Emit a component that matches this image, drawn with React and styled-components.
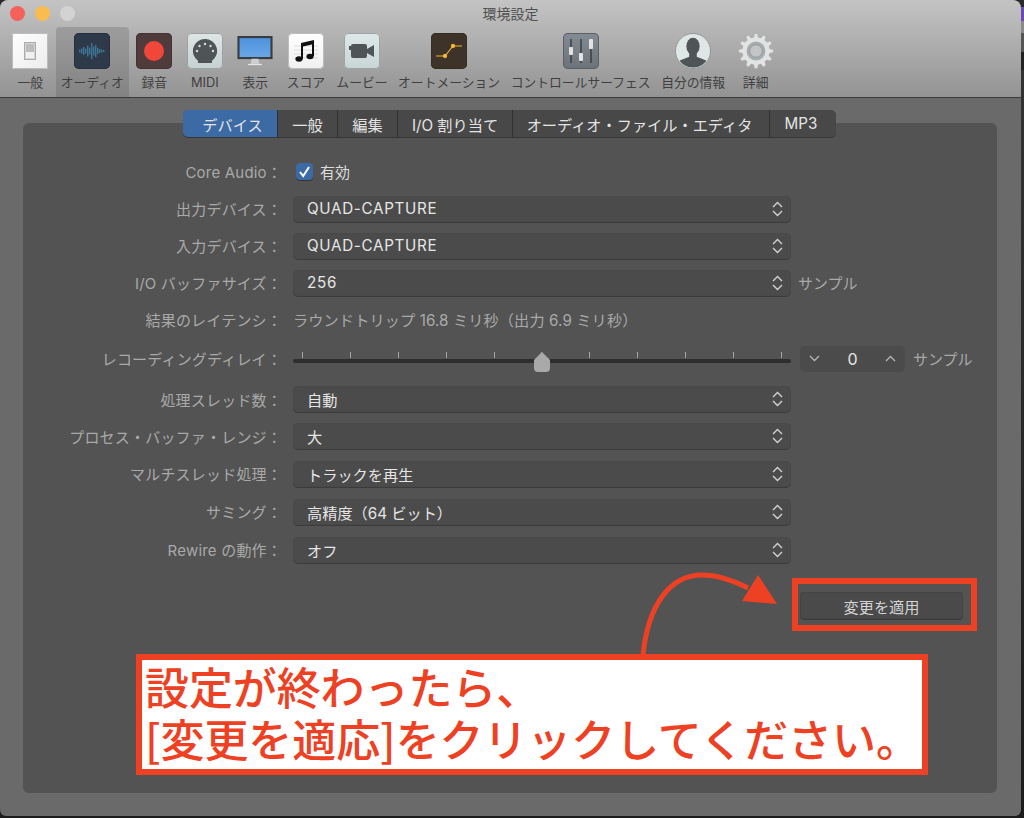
import React from 'react';
import styled, { createGlobalStyle } from 'styled-components';

const GlobalStyle = createGlobalStyle`
  html, body {
    margin: 0;
    padding: 0;
    width: 1024px;
    height: 818px;
    overflow: hidden;
    background: linear-gradient(#2a2a2c 0, #2a2a2c 7px, #6a4bb0 7px, #6a4bb0 21px, #8a8a8a 21px, #8a8a8a 33px, #555 33px, #555 52px, #222 52px, #222 70px, #333 70px, #1c1c1c 818px);
    font-family: Inter, "Noto Sans CJK JP", sans-serif;
  }
  * { box-sizing: border-box; }
`;

const Window = styled.div`
  position: relative;
  width: 1021px;
  height: 816px;
  border-radius: 8px 8px 6px 6px;
  overflow: hidden;
  background: #6a6a6a;
  display: flex;
  flex-direction: column;
`;

const TitleBar = styled.div`
  height: 27px;
  display: flex;
  align-items: center;
  padding-left: 10px;
  gap: 10px;
  position: relative;
`;

const Light = styled.span`
  width: 15px;
  height: 15px;
  border-radius: 50%;
  background: ${(p) => p.color};
`;

const Title = styled.div`
  position: absolute;
  left: 0;
  right: 0;
  top: 3px;
  text-align: center;
  font-size: 14px;
  line-height: 22px;
  color: #4f4f4f;
`;

const Header = styled.header`
  height: 98px;
  background: linear-gradient(#c4c4c4, #939393);
  border-bottom: 1px solid #3c3c3c;
  flex: none;
`;

const Toolbar = styled.nav`
  display: flex;
  padding-left: 5px;
  height: 70px;
`;

const ToolItem = styled.div`
  display: flex;
  flex-direction: column;
  align-items: center;
  padding: 0 5.25px;
  min-width: 50.5px;
  border-radius: 4px 4px 0 0;
  background: ${(p) => (p.$active ? 'rgba(90,90,90,0.28)' : 'transparent')};
`;

const IconBox = styled.div`
  width: 36px;
  height: 36px;
  margin-top: 6px;
  flex: none;
  display: flex;
  align-items: center;
  justify-content: center;
`;

const ToolLabel = styled.span`
  margin-top: 5px;
  font-size: 12.8px;
  line-height: 18px;
  color: #3f3f3f;
  white-space: nowrap;
`;

const Content = styled.main`
  flex: 1;
  padding: 12px 24px 23px 23px;
  display: flex;
  flex-direction: column;
  align-items: stretch;
`;

const Tabs = styled.div`
  align-self: center;
  display: flex;
  height: 27px;
  margin: 0 0 -14px -1px;
  position: relative;
  z-index: 1;
  border-radius: 5px;
  background: #484848;
  box-shadow: 0 1px 0 #363636;
  overflow: hidden;
`;

const Tab = styled.div`
  width: ${(p) => p.$w}px;
  padding: 0 ${(p) => p.$right || 0}px 0 ${(p) => p.$left || 0}px;
  display: flex;
  align-items: center;
  justify-content: center;
  font-size: 15.2px;
  color: #e4e4e4;
  white-space: nowrap;
  background: ${(p) => (p.$active ? '#3c6aa5' : 'transparent')};
  & + & {
    border-left: 1px solid #303030;
  }
`;

const Panel = styled.section`
  flex: 1;
  background: #535353;
  border-radius: 6px;
  padding-top: 30px;
  display: flex;
  flex-direction: column;
`;

const Row = styled.div`
  display: flex;
  align-items: center;
  height: ${(p) => p.$h || 37}px;
  flex: none;
`;

const Label = styled.div`
  flex: none;
  width: 259px;
  margin-right: 11px;
  text-align: right;
  font-size: 15px;
  letter-spacing: 0.2px;
  color: #a9a9a9;
  white-space: nowrap;
`;

const Select = styled.div`
  width: 498px;
  height: 26px;
  border-radius: 5px;
  background: #4b4b4b;
  box-shadow: inset 0 0 0 1px #494949, 0 1px 0 #3b3b3b;
  display: flex;
  align-items: center;
  justify-content: space-between;
  padding: 0 7px 0 14px;
  font-size: 15.2px;
  letter-spacing: ${(p) => (p.$wide ? '0.7px' : '0')};
  color: #e6e6e6;
  flex: none;
`;

const Unit = styled.span`
  margin-left: ${(p) => p.$gap}px;
  font-size: 15px;
  color: #a9a9a9;
  white-space: nowrap;
`;

const Check = styled.span`
  width: 17px;
  height: 17px;
  margin-left: 3px;
  border-radius: 4px;
  background: #3c6aa5;
  box-shadow: 0 1px 0 #333;
  display: flex;
  align-items: center;
  justify-content: center;
`;

const CheckLabel = styled.span`
  margin-left: 7px;
  font-size: 15px;
  color: #dcdcdc;
`;

const Static = styled.span`
  font-size: 15.2px;
  letter-spacing: 0.1px;
  color: #a9a9a9;
  white-space: nowrap;
`;

const Slider = styled.div`
  position: relative;
  width: 498px;
  height: 26px;
  flex: none;
`;

const Track = styled.div`
  position: absolute;
  left: 0;
  right: 0;
  top: 13px;
  height: 4px;
  border-radius: 2px;
  background: #2e2e2e;
`;

const Ticks = styled.div`
  display: flex;
  justify-content: space-between;
  padding: 6px 9px 0;
`;

const Tick = styled.span`
  width: 1px;
  height: 6px;
  background: #a5a5a5;
`;

const Thumb = styled.svg`
  position: absolute;
  left: 240px;
  top: 5px;
`;

const Stepper = styled.div`
  width: 105px;
  height: 26px;
  margin-left: 9px;
  border-radius: 5px;
  background: #4b4b4b;
  display: flex;
  align-items: center;
  justify-content: space-between;
  padding: 0 9px;
  font-size: 16px;
  color: #e6e6e6;
  flex: none;
`;

const ButtonRow = styled.div`
  display: flex;
  justify-content: flex-end;
  margin-top: 23.5px;
  padding-right: 34px;
`;

const Apply = styled.button`
  width: 163px;
  height: 27px;
  border: 0;
  border-radius: 4px;
  background: #4a4a4a;
  box-shadow: inset 0 0 0 1px #444, 0 1px 0 #3a3a3a;
  color: #d4d4d4;
  font-family: inherit;
  font-size: 15.2px;
  padding: 0;
`;

const HighlightBox = styled.div`
  position: absolute;
  left: 792px;
  top: 578px;
  width: 185px;
  height: 53px;
  border: 6px solid #ee4123;
`;

const Arrow = styled.svg`
  position: absolute;
  left: 630px;
  top: 565px;
`;

const Callout = styled.div`
  position: absolute;
  left: 136px;
  top: 654px;
  width: 792px;
  height: 121px;
  border: 6px solid #ee4123;
  background: #fff;
  padding: 0 0 0 3px;
  color: #ee4123;
  font-family: "Noto Sans CJK JP", sans-serif;
  font-weight: 500;
  font-size: 44px;
  letter-spacing: -0.1px;
  line-height: 52px;
  white-space: nowrap;
`;

const IconTile = styled.div`
  width: 36px;
  height: 36px;
  border-radius: ${(p) => p.$r ?? 5}px;
  background: ${(p) => p.$bg};
  box-shadow: inset 0 0 0 1px ${(p) => p.$edge || 'rgba(0,0,0,0.15)'};
  display: flex;
  align-items: center;
  justify-content: center;
`;

const UpDown = () => (
  <svg width="13" height="18" viewBox="0 0 13 18" fill="none" stroke="#d2d2d2" strokeWidth="1.4">
    <path d="M2 7l4.5-4.5L11 7M2 11l4.5 4.5L11 11" />
  </svg>
);

const Chevron = ({ up }) => (
  <svg width="11" height="7" viewBox="0 0 11 7" fill="none" stroke="#b5b5b5" strokeWidth="1.3">
    <path d={up ? 'M1 6l4.5-4.5L10 6' : 'M1 1l4.5 4.5L10 1'} />
  </svg>
);

const SwitchIcon = () => (
  <IconTile $r={1} $bg="linear-gradient(135deg,#fff,#ececec)" $edge="#bdbdbd">
    <svg width="14" height="20" viewBox="0 0 14 20">
      <rect x="1.5" y="1.5" width="11" height="17" fill="#d5d5d5" stroke="#aaa" />
      <rect x="3" y="3" width="8" height="8" fill="#bcbcbc" />
      <rect x="3" y="11" width="8" height="6" fill="#f0f0f0" />
    </svg>
  </IconTile>
);

const WaveIcon = () => (
  <IconTile $bg="#2e3a4a" $edge="#263040">
    <svg width="26" height="18" viewBox="0 0 26 18" stroke="#4aa3d0" strokeWidth="0.8">
      {[3, 5, 8, 5, 11, 7, 16, 9, 12, 6, 4, 3, 2].map((h, i) => (
        <line key={i} x1={0.8 + i * 2} x2={0.8 + i * 2} y1={9 - h / 2} y2={9 + h / 2} />
      ))}
    </svg>
  </IconTile>
);

const RecordIcon = () => (
  <IconTile $bg="#4f3a3c" $edge="#443234">
    <svg width="22" height="22" viewBox="0 0 22 22">
      <circle cx="11" cy="11" r="10" fill="#f0473a" />
    </svg>
  </IconTile>
);

const MidiIcon = () => (
  <IconTile $bg="linear-gradient(#dfe6e6,#c6d0d0)" $edge="#9aa3a3">
    <svg width="26" height="26" viewBox="0 0 26 26">
      <path d="M13 1a12 12 0 0 1 7 21.8V25H6v-2.2A12 12 0 0 1 13 1z" fill="#4f5556" />
      {[[5, 13], [7.5, 8], [13, 6], [18.5, 8], [21, 13]].map(([x, y]) => (
        <circle key={x} cx={x} cy={y} r="1.2" fill="#d6dddd" />
      ))}
    </svg>
  </IconTile>
);

const DisplayIcon = () => (
  <svg width="42" height="36" viewBox="0 0 42 36">
    <defs>
      <linearGradient id="screenFill" x1="0" y1="0" x2="0" y2="1">
        <stop offset="0" stopColor="#4f93de" />
        <stop offset="1" stopColor="#6aa6e6" />
      </linearGradient>
    </defs>
    <rect x="0.5" y="0.5" width="41" height="27" fill="#3a3d40" />
    <rect x="3" y="3" width="36" height="22" fill="url(#screenFill)" />
    <path d="M17 27h8l1 6H16z" fill="#cfcfcf" />
    <rect x="13" y="33" width="16" height="1.5" fill="#e6e6e6" />
  </svg>
);

const ScoreIcon = () => (
  <IconTile $bg="linear-gradient(#fff,#f0f0f0)" $edge="#bdbdbd">
    <svg width="28" height="28" viewBox="0 0 28 28">
      <path d="M2 9h24M2 13h24M2 17h24M2 21h24" stroke="#dcdcdc" />
      <path d="M10 7v15M21 4v15" stroke="#111" strokeWidth="2" />
      <path d="M9 6l13-3v4l-13 3z" fill="#111" />
      <ellipse cx="7" cy="22" rx="3.6" ry="2.8" fill="#111" />
      <ellipse cx="18" cy="19.5" rx="3.6" ry="2.8" fill="#111" />
    </svg>
  </IconTile>
);

const MovieIcon = () => (
  <IconTile $bg="linear-gradient(#dfe8e8,#c9d5d5)" $edge="#9aa5a5">
    <svg width="26" height="16" viewBox="0 0 26 16" fill="#4f5556">
      <rect x="2" y="1" width="16" height="14" rx="2" />
      <rect x="0" y="3" width="3" height="4" />
      <path d="M18 6l7-4v12l-7-4z" />
    </svg>
  </IconTile>
);

const AutomationIcon = () => (
  <IconTile $bg="#3d3329" $edge="#352c23">
    <svg width="28" height="18" viewBox="0 0 28 18" fill="none" stroke="#f2b632" strokeWidth="1.1">
      <path d="M1 14h9l8-10h9" />
      <circle cx="10" cy="14" r="1.6" fill="#f2b632" />
      <circle cx="18" cy="4" r="1.6" fill="#f2b632" />
    </svg>
  </IconTile>
);

const FaderIcon = () => (
  <IconTile $bg="linear-gradient(#858b92,#6c7279)" $edge="#5b6066">
    <svg width="28" height="28" viewBox="0 0 28 28">
      <path d="M4 2v24M14 2v24M24 2v24" stroke="#26282b" strokeWidth="1.1" />
      <rect x="2" y="10" width="4" height="8" rx="1" fill="#e2e2e2" />
      <rect x="12" y="16" width="4" height="8" rx="1" fill="#e2e2e2" />
      <rect x="22" y="2" width="4" height="10" rx="1" fill="#e2e2e2" />
    </svg>
  </IconTile>
);

const UserIcon = () => (
  <svg width="38" height="38" viewBox="0 0 38 38">
    <defs>
      <clipPath id="userClip">
        <circle cx="19" cy="19" r="17.5" />
      </clipPath>
    </defs>
    <circle cx="19" cy="19" r="18.5" fill="#dfe6e6" stroke="#8f9595" />
    <g clipPath="url(#userClip)" fill="#4f5556">
      <ellipse cx="19" cy="14" rx="7" ry="9" />
      <path d="M15 21h8v4l10 4v9H5v-9l10-4z" />
    </g>
  </svg>
);

const gearPath = () => {
  const teeth = 12;
  const pts = [];
  for (let i = 0; i < teeth; i++) {
    const a = (i * 2 * Math.PI) / teeth;
    const step = (2 * Math.PI) / teeth;
    [[-0.32, 15.5], [-0.16, 19.5], [0.16, 19.5], [0.32, 15.5]].forEach(([o, r]) => {
      const t = a + o * step;
      pts.push(`${(20 + r * Math.cos(t)).toFixed(2)} ${(20 + r * Math.sin(t)).toFixed(2)}`);
    });
  }
  return `M${pts.join('L')}Z`;
};

const GearIcon = () => (
  <svg width="40" height="40" viewBox="0 0 40 40">
    <path d={gearPath()} fill="#e2e4e4" stroke="#a3a3a3" strokeWidth="0.6" />
    <circle cx="20" cy="20" r="10.5" fill="#a6adaf" />
    <circle cx="20" cy="20" r="7" fill="#c4c6c6" stroke="#8e9496" />
  </svg>
);

const tools = [
  { label: '一般', icon: <SwitchIcon /> },
  { label: 'オーディオ', icon: <WaveIcon />, active: true },
  { label: '録音', icon: <RecordIcon /> },
  { label: 'MIDI', icon: <MidiIcon /> },
  { label: '表示', icon: <DisplayIcon /> },
  { label: 'スコア', icon: <ScoreIcon /> },
  { label: 'ムービー', icon: <MovieIcon /> },
  { label: 'オートメーション', icon: <AutomationIcon /> },
  { label: 'コントロールサーフェス', icon: <FaderIcon /> },
  { label: '自分の情報', icon: <UserIcon /> },
  { label: '詳細', icon: <GearIcon /> },
];

const tabs = [
  { label: 'デバイス', w: 94, active: true, left: 5 },
  { label: '一般', w: 60 },
  { label: '編集', w: 60 },
  { label: 'I/O 割り当て', w: 115 },
  { label: 'オーディオ・ファイル・エディタ', w: 257, right: 3 },
  { label: 'MP3', w: 67, right: 4 },
];

const SelectRow = ({ label, value, unit, h, wide }) => (
  <Row $h={h}>
    <Label>{label}：</Label>
    <Select $wide={wide}>
      {value}
      <UpDown />
    </Select>
    {unit && <Unit $gap={7}>{unit}</Unit>}
  </Row>
);

const App = () => (
  <>
    <GlobalStyle />
    <Window>
      <Header>
        <TitleBar>
          <Light color="#f4605a" />
          <Light color="#f9bd4d" />
          <Light color="#d3d3d3" />
          <Title>環境設定</Title>
        </TitleBar>
        <Toolbar>
          {tools.map((t) => (
            <ToolItem key={t.label} $active={t.active}>
              <IconBox>{t.icon}</IconBox>
              <ToolLabel>{t.label}</ToolLabel>
            </ToolItem>
          ))}
        </Toolbar>
      </Header>
      <Content>
        <Tabs>
          {tabs.map((t) => (
            <Tab key={t.label} $w={t.w} $active={t.active} $left={t.left} $right={t.right}>
              {t.label}
            </Tab>
          ))}
        </Tabs>
        <Panel>
          <Row>
            <Label>Core Audio：</Label>
            <Check>
              <svg width="13" height="13" viewBox="0 0 13 13" fill="none" stroke="#fff" strokeWidth="2">
                <path d="M2 7l3.2 4L11 2" />
              </svg>
            </Check>
            <CheckLabel>有効</CheckLabel>
          </Row>
          <SelectRow label="出力デバイス" value="QUAD-CAPTURE" wide />
          <SelectRow label="入力デバイス" value="QUAD-CAPTURE" wide />
          <SelectRow label="I/O バッファサイズ" value="256" unit="サンプル" wide />
          <Row $h={36}>
            <Label>結果のレイテンシ：</Label>
            <Static>ラウンドトリップ 16.8 ミリ秒（出力 6.9 ミリ秒）</Static>
          </Row>
          <Row $h={43.5}>
            <Label>レコーディングディレイ：</Label>
            <Slider>
              <Ticks>
                {Array.from({ length: 11 }, (_, i) => (
                  <Tick key={i} />
                ))}
              </Ticks>
              <Track />
              <Thumb width="18" height="22" viewBox="0 0 18 22">
                <path d="M9 1l8 8v8q0 4-4 4H5q-4 0-4-4V9z" fill="#a9a9a9" />
              </Thumb>
            </Slider>
            <Stepper>
              <Chevron />
              0
              <Chevron up />
            </Stepper>
            <Unit $gap={8}>サンプル</Unit>
          </Row>
          <SelectRow label="処理スレッド数" value="自動" />
          <SelectRow label="プロセス・バッファ・レンジ" value="大" />
          <SelectRow label="マルチスレッド処理" value="トラックを再生" h={38} />
          <SelectRow label="サミング" value="高精度（64 ビット）" h={38} />
          <SelectRow label="Rewire の動作" value="オフ" h={38} />
          <ButtonRow>
            <Apply>変更を適用</Apply>
          </ButtonRow>
        </Panel>
      </Content>
      <HighlightBox />
      <Arrow width="150" height="92" viewBox="0 0 150 92">
        <path d="M13 90C18 40 40 10 72 10c15 0 28 4 46 13" fill="none" stroke="#ee4123" strokeWidth="5" />
        <path d="M128 10l19 29-35-3z" fill="#ee4123" />
      </Arrow>
      <Callout>
        設定が終わったら、
        <br />
        [変更を適応]をクリックしてください。
      </Callout>
    </Window>
  </>
);

export default App;
